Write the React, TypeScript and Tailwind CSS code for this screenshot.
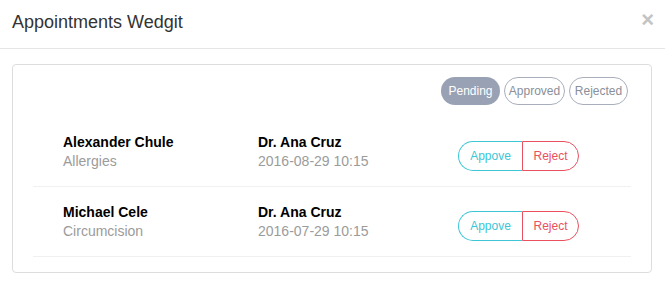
import React from "react";

const rows = [
    { patient: "Alexander Chule", reason: "Allergies", doctor: "Dr. Ana Cruz", when: "2016-08-29 10:15" },
    { patient: "Michael Cele", reason: "Circumcision", doctor: "Dr. Ana Cruz", when: "2016-07-29 10:15" },
];

export default function App() {
    return (
        <div className="w-[665px] h-[305px] bg-white font-['Liberation_Sans',Arial,sans-serif] text-[#333]">
            {/* Header */}
            <div className="h-[49px] border-b border-[#e5e5e5] flex items-start justify-between pl-3 pr-[11px] pt-3">
                <h2 className="text-[18px] leading-[20px] text-[#333]">Appointments Wedgit</h2>
                <button className="text-[22px] leading-[18px] font-bold text-[#c4c4c4] -mt-[1px]">×</button>
            </div>

            {/* Body */}
            <div className="pt-[15px] pl-3 pr-[13px]">
                <div className="border border-[#dddddd] rounded-[4px] px-5 pb-[15px] pt-[12px]">
                    {/* Filter pills */}
                    <div className="flex justify-end gap-1 pr-[3px]">
                        <button className="w-[59px] h-[28px] rounded-full bg-[#98a2b4] text-white text-[12px]">Pending</button>
                        <button className="w-[61px] h-[28px] rounded-full border border-[#a8aebb] text-[#8a8f99] text-[12px]">Approved</button>
                        <button className="w-[59px] h-[28px] rounded-full border border-[#a8aebb] text-[#8a8f99] text-[12px]">Rejected</button>
                    </div>

                    {/* Appointment rows */}
                    <div className="mt-[12px]">
                        {rows.map((r, i) => (
                            <div key={i} className="h-[70px] border-b border-[#f0f0f0] flex items-center pl-[30px]">
                                <div className="w-[195px]">
                                    <p className="text-[14px] leading-[18px] font-bold text-black">{r.patient}</p>
                                    <p className="text-[14px] leading-[20px] text-[#9b9b9b]">{r.reason}</p>
                                </div>
                                <div className="w-[200px]">
                                    <p className="text-[14px] leading-[18px] font-bold text-black">{r.doctor}</p>
                                    <p className="text-[14px] leading-[20px] text-[#9b9b9b]">{r.when}</p>
                                </div>
                                <div className="flex mt-[8px]">
                                    <button className="w-[64px] h-[30px] border border-r-0 border-[#3cc6d6] rounded-l-full text-[12px] text-[#3cc6d6]">Appove</button>
                                    <button className="w-[57px] h-[30px] border border-[#e9515f] rounded-r-full text-[12px] text-[#e9515f]">Reject</button>
                                </div>
                            </div>
                        ))}
                    </div>
                </div>
            </div>
        </div>
    );
}
